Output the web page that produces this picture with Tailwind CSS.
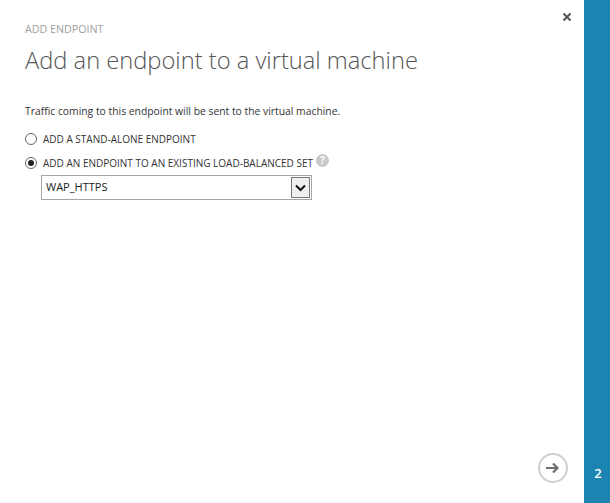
<!DOCTYPE html>
<html lang="en">
<head>
  <meta charset="UTF-8" />
  <title>Add endpoint</title>
  <script src="https://cdn.jsdelivr.net/npm/@tailwindcss/browser@4"></script>
</head>
<body class="bg-white h-[503px] w-[610px] overflow-hidden flex font-['Open_Sans',sans-serif]">

  <!-- Dialog -->
  <main class="relative w-[584px] h-full flex flex-col pl-[25px] pt-[22px]">
    <button class="absolute right-[12px] top-[12px] text-[#555]">
      <svg width="10" height="10" viewBox="0 0 10 10" class="block"><path d="M1.500 1.500l7 7M8.500 1.500l-7 7" stroke="currentColor" stroke-width="2"/></svg>
    </button>

    <p class="text-[10.700px] leading-[14px] text-[#a0a0a0]">ADD ENDPOINT</p>
    <h1 class="mt-[8px] text-[23.700px] leading-[32px] font-light text-[#555]">Add an endpoint to a virtual machine</h1>
    <p class="mt-[28px] text-[10.350px] leading-[14px] text-[#333]">Traffic coming to this endpoint will be sent to the virtual machine.</p>

    <!-- Options -->
    <label class="mt-[14px] flex items-center gap-[6px] h-[14px] text-[10px] text-[#333]">
      <span class="w-[12px] h-[12px] rounded-full border border-[#666] bg-white"></span>
      ADD A STAND-ALONE ENDPOINT
    </label>
    <label class="mt-[10px] flex items-center gap-[6px] h-[14px] text-[10px] text-[#333]">
      <span class="w-[12px] h-[12px] rounded-full border border-[#666] bg-white flex items-center justify-center">
        <span class="w-[6px] h-[6px] rounded-full bg-[#222]"></span>
      </span>
      ADD AN ENDPOINT TO AN EXISTING LOAD-BALANCED SET
      <span class="w-[13px] h-[13px] -mt-[5px] -ml-[3px] rounded-full bg-[#c8c8c8] text-white text-[10px] leading-[13px] font-bold text-center">?</span>
    </label>

    <!-- Select -->
    <div class="mt-[5px] ml-[16px] w-[271px] h-[25px] border border-[#a6a6a6] flex items-center justify-between pl-[4px] pr-[1px] text-[11px] text-[#222]">
      WAP_HTTPS
      <span class="w-[19px] h-[21px] border border-[#777] bg-[#f0f0f0] flex items-center justify-center">
        <svg width="11" height="8" viewBox="0 0 11 8"><path d="M1 1.500l4.500 4.500 4.500-4.500" fill="none" stroke="#111" stroke-width="2"/></svg>
      </span>
    </div>

    <button class="absolute left-[538px] top-[453px] w-[30px] h-[30px] rounded-full border-2 border-[#cfcfcf] flex items-center justify-center bg-white">
      <svg width="14" height="12" viewBox="0 0 14 12"><path d="M0 6h11M7 1.500l4.500 4.500-4.500 4.500" fill="none" stroke="#6e6e6e" stroke-width="2.200"/></svg>
    </button>
  </main>

  <!-- Step rail -->
  <aside class="w-[26px] h-full bg-[#1b84b0] flex flex-col justify-end items-center pb-[22px] pl-[2px] text-white text-[13px] leading-[16px] font-semibold">2</aside>

</body>
</html>
